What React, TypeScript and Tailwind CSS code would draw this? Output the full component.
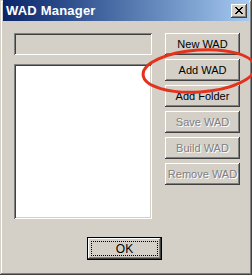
/* WAD Manager dialog, Windows classic look. */

const raised =
  "shadow-[inset_-1px_-1px_#404040,inset_1px_1px_#ffffff,inset_-2px_-2px_#808080,inset_2px_2px_#d4d0c8]";
const sunken =
  "shadow-[inset_1px_1px_#808080,inset_-1px_-1px_#ffffff,inset_2px_2px_#404040,inset_-2px_-2px_#d4d0c8]";

const buttons = [
  { label: "New WAD", enabled: true },
  { label: "Add WAD", enabled: true },
  { label: "Add Folder", enabled: true },
  { label: "Save WAD", enabled: false },
  { label: "Build WAD", enabled: false },
  { label: "Remove WAD", enabled: false },
];

function DialogButton({ label, enabled }: { label: string; enabled: boolean }) {
  return (
    <div
      className={`h-[22px] w-[75px] bg-[#d4d0c8] flex items-center justify-center ${raised} ${
        enabled ? "text-black" : "text-[#808080] [text-shadow:1px_1px_0_#ffffff]"
      }`}
    >
      {label}
    </div>
  );
}

export default function App() {
  return (
    <div className="relative w-[252px] h-[275px] bg-[#d4d0c8] p-[3px] font-['Liberation_Sans',Arial,sans-serif] text-[11px] shadow-[inset_-1px_-1px_#404040,inset_1px_1px_#d4d0c8,inset_-2px_-2px_#808080,inset_2px_2px_#ffffff] overflow-hidden">
      {/* Title bar */}
      <div className="-mt-[3px] h-[21px] flex items-center justify-between pl-[3px] pr-[2px] bg-gradient-to-r from-[#0a246a] to-[#a6caf0]">
        <span className="text-white font-bold text-[13px] tracking-[0.2px]">WAD Manager</span>
        <div className={`w-[16px] h-[14px] bg-[#d4d0c8] flex items-center justify-center ${raised}`}>
          <svg width="8" height="7" viewBox="0 0 8 7" className="-mt-[1px]">
            <path d="M0 0h2v1h-2zM6 0h2v1h-2zM1 1h2v1h-2zM5 1h2v1h-2zM2 2h4v1h-4zM3 3h2v1h-2zM2 4h4v1h-4zM1 5h2v1h-2zM5 5h2v1h-2zM0 6h2v1h-2zM6 6h2v1h-2z" fill="#000" />
          </svg>
        </div>
      </div>

      {/* Body */}
      <div className="flex pt-[12px] pl-[11px] gap-[13px]">
        <div className="flex flex-col gap-[9px] w-[138px]">
          <div className={`h-[22px] bg-[#d4d0c8] ${sunken}`} />
          <div className={`h-[155px] bg-white ${sunken}`} />
        </div>
        <div className="flex flex-col gap-[4px]">
          {buttons.map((b) => (
            <DialogButton key={b.label} label={b.label} enabled={b.enabled} />
          ))}
        </div>
      </div>

      {/* OK */}
      <div className="pl-[84px] pt-[18px]">
        <div className="w-[75px] h-[23px] border border-black bg-[#d4d0c8]">
          <div className={`w-full h-full p-[3px] ${raised}`}>
            <div className="w-full h-full border border-dotted border-black flex items-center justify-center text-black text-[12px]">
              OK
            </div>
          </div>
        </div>
      </div>

      {/* Red annotation ring */}
      <svg className="absolute left-0 top-0 pointer-events-none" width="252" height="275" viewBox="0 0 252 275">
        <ellipse cx="199" cy="71" rx="56" ry="21" fill="none" stroke="#e4321c" strokeWidth="3" transform="rotate(-4 199 71)" />
      </svg>
    </div>
  );
}
